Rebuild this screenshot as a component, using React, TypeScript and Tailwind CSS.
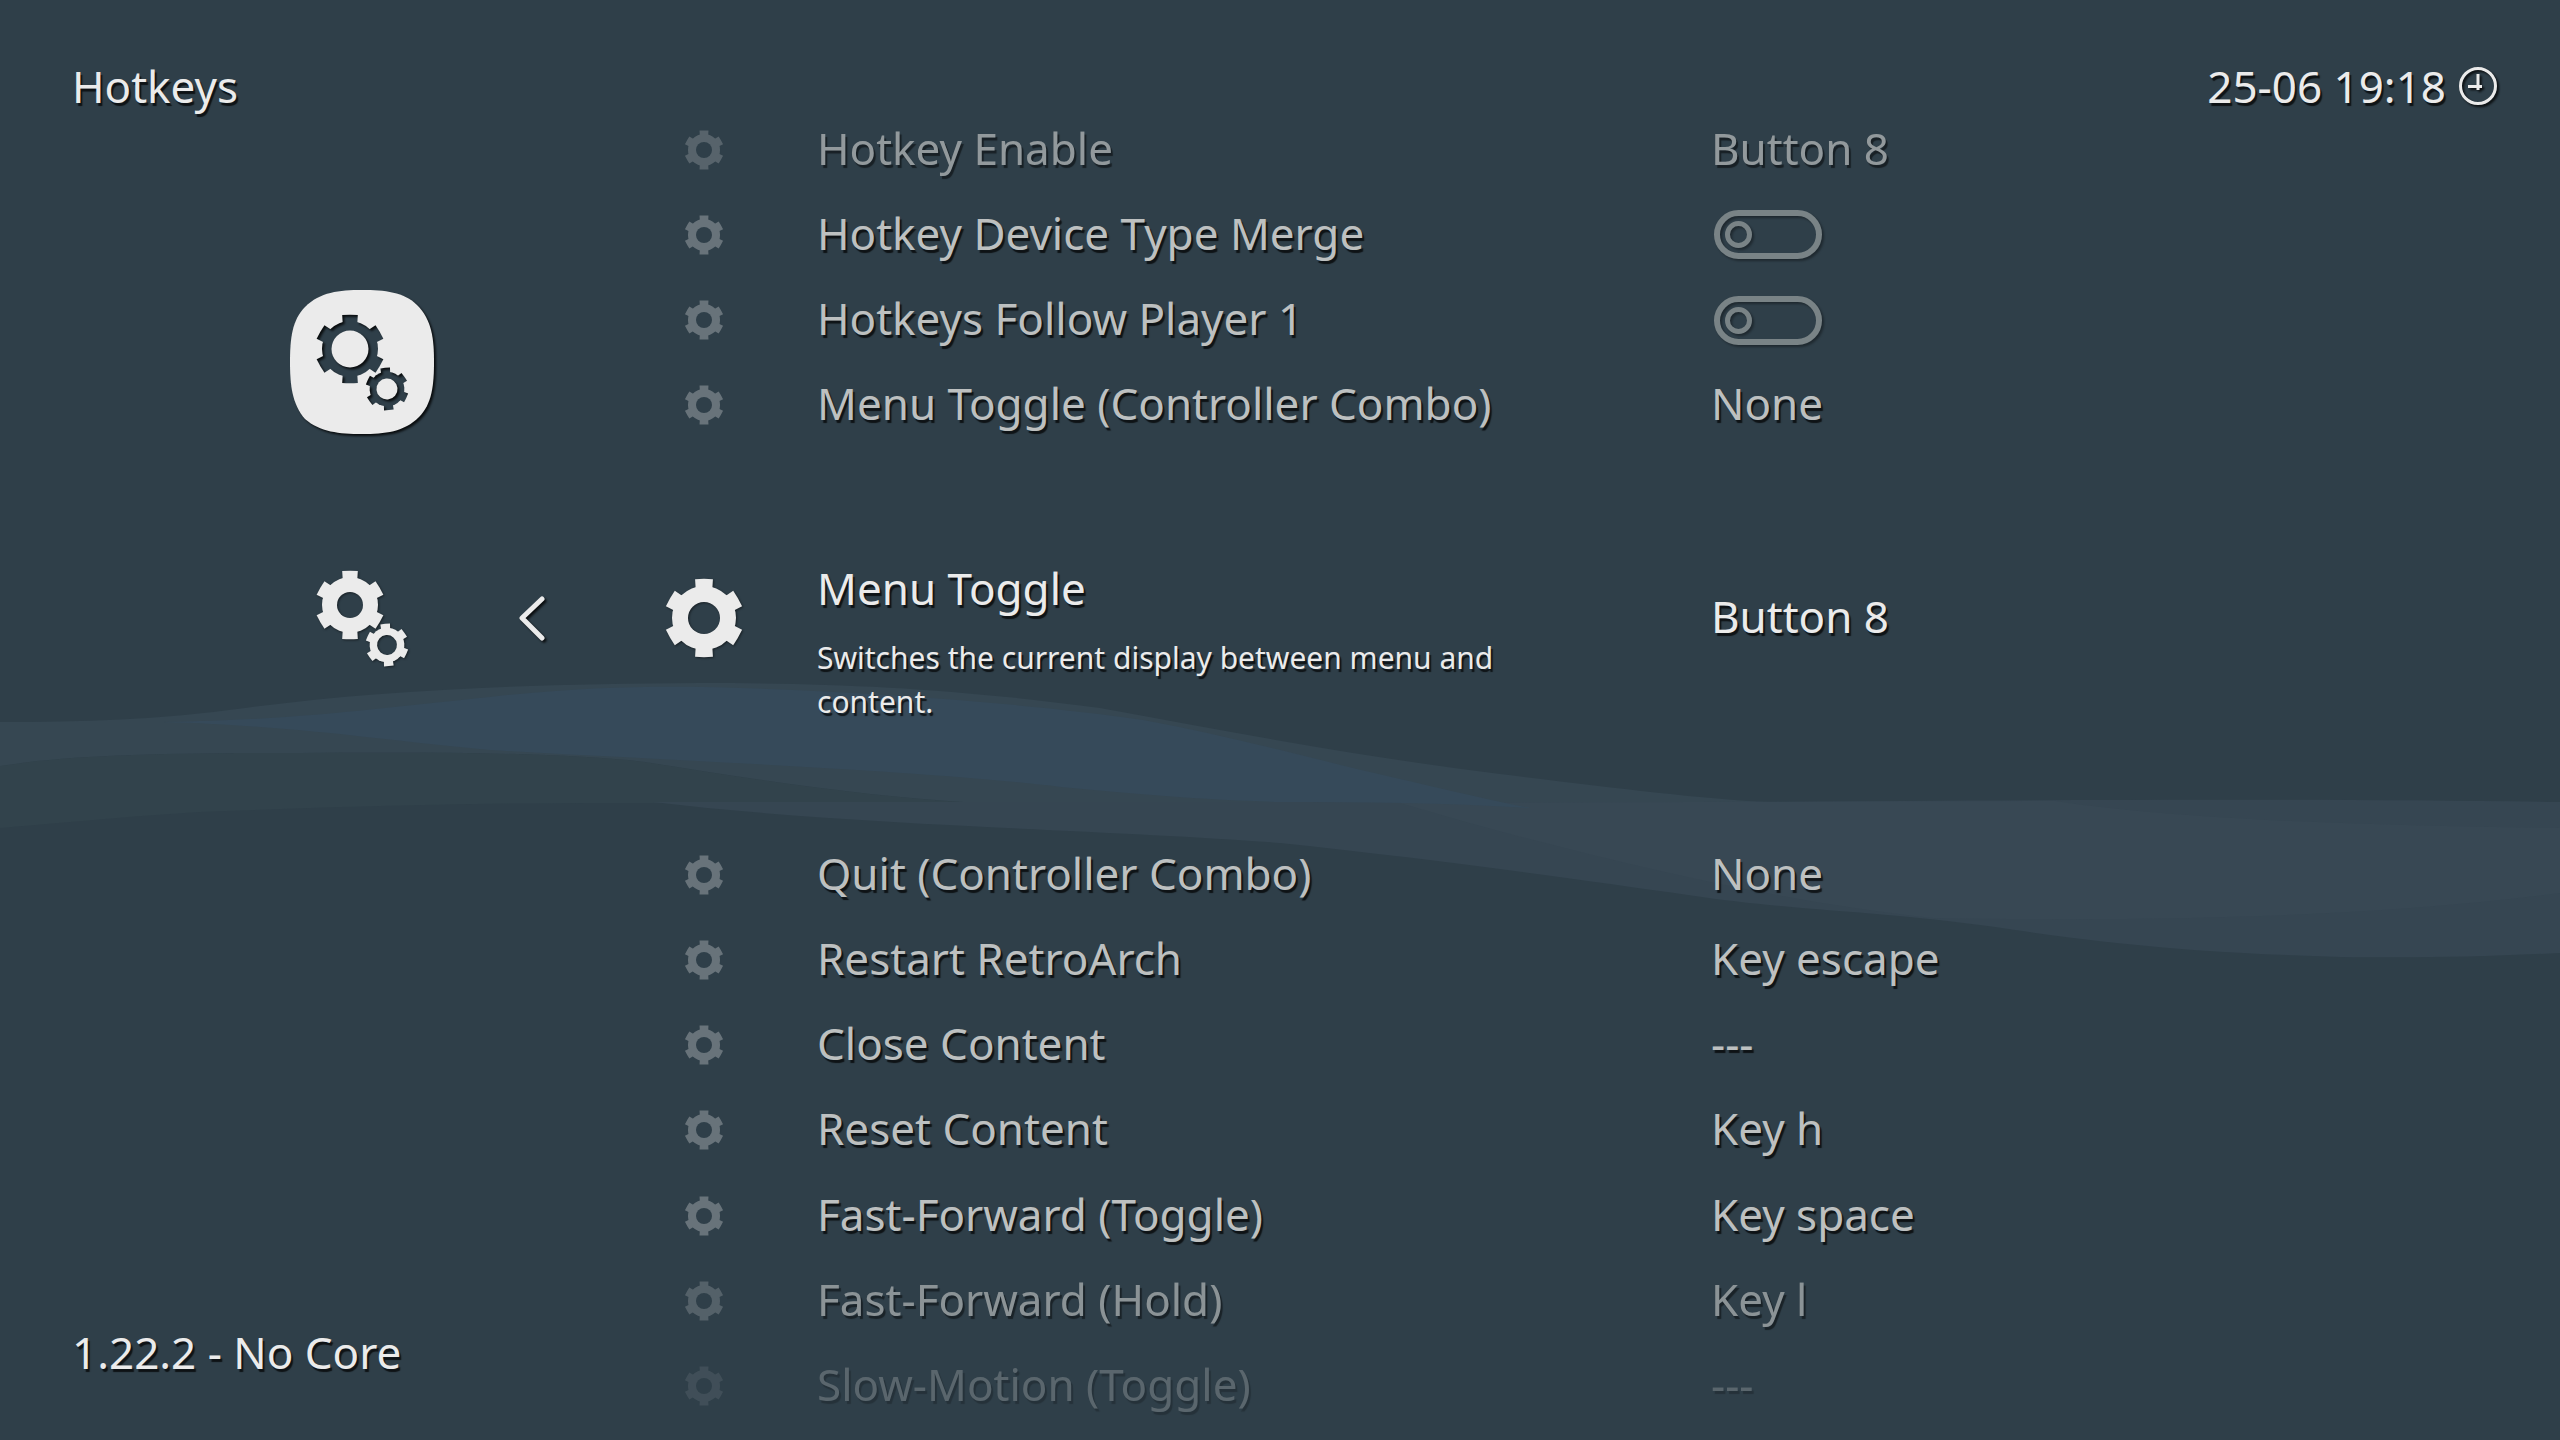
import { useState } from 'react'
import clsx from 'clsx'

type Hotkey = {
   name: string
   value?: string
   fade?: string
}

const above: Hotkey[] = [
   { name: 'Hotkey Enable', value: 'Button 8', fade: 'opacity-70' },
   { name: 'Hotkey Device Type Merge' },
   { name: 'Hotkeys Follow Player 1' },
   { name: 'Menu Toggle (Controller Combo)', value: 'None' },
]

const below: Hotkey[] = [
   { name: 'Quit (Controller Combo)', value: 'None' },
   { name: 'Restart RetroArch', value: 'Key escape' },
   { name: 'Close Content', value: '---' },
   { name: 'Reset Content', value: 'Key h' },
   { name: 'Fast-Forward (Toggle)', value: 'Key space' },
   { name: 'Fast-Forward (Hold)', value: 'Key l', fade: 'opacity-65' },
   { name: 'Slow-Motion (Toggle)', value: '---', fade: 'opacity-30' },
]

const TEETH = [0, 60, 120, 180, 240, 300]

const Gear = ({ hole = 'black', holeRadius = 13 }: { hole?: string; holeRadius?: number }) => (
   <>
      <circle r="28" />
      {TEETH.map((angle) => (
         <path key={angle} d="M-7.2-24 L-7.8-34 Q0-34.6 7.8-34 L7.2-24Z" transform={`rotate(${angle})`} />
      ))}
      <circle r={holeRadius} fill={hole} />
   </>
)

const GearIcon = ({ className }: { className?: string }) => (
   <svg viewBox="-35 -35 70 70" className={className} aria-hidden="true">
      <mask id="gear" maskUnits="userSpaceOnUse" x="-35" y="-35" width="70" height="70">
         <g fill="white">
            <Gear holeRadius={14} />
         </g>
      </mask>
      <rect x="-35" y="-35" width="70" height="70" fill="#ebebeb" mask="url(#gear)" />
   </svg>
)

const SettingsTile = () => (
   <svg
      viewBox="0 0 144 144"
      className="size-[144px] [filter:drop-shadow(2px_2px_1px_rgba(0,0,0,0.8))]"
      aria-hidden="true"
   >
      <mask id="tile" maskUnits="userSpaceOnUse" x="0" y="0" width="144" height="144">
         <path
            d="M72 0C95 0 114 2 127 15C142 30 144 49 144 72C144 95 142 114 129 127C114 142 95 144 72 144C49 144 30 142 15 129C2 114 0 95 0 72C0 49 2 30 15 17C30 2 49 0 72 0Z"
            fill="white"
         />
         <g fill="black">
            <g transform="translate(60 59)">
               <Gear hole="white" holeRadius={18.5} />
            </g>
            <g transform="translate(97 99) rotate(-5) scale(0.62)">
               <Gear hole="white" holeRadius={17} />
            </g>
         </g>
      </mask>
      <rect width="144" height="144" fill="#ebebeb" mask="url(#tile)" />
   </svg>
)

const SettingsIcon = () => (
   <svg
      viewBox="0 0 144 144"
      className="size-[144px] [filter:drop-shadow(1px_1px_1px_rgba(0,0,0,0.5))]"
      aria-hidden="true"
   >
      <mask id="gears" maskUnits="userSpaceOnUse" x="0" y="0" width="144" height="144">
         <g fill="white">
            <g transform="translate(60 59)">
               <Gear />
            </g>
            <g transform="translate(97 99) rotate(-5) scale(0.62)">
               <Gear holeRadius={16} />
            </g>
         </g>
      </mask>
      <rect width="144" height="144" fill="#ebebeb" mask="url(#gears)" />
   </svg>
)

const Clock = () => (
   <svg
      viewBox="0 0 40 40"
      className="size-10 [filter:drop-shadow(2px_2px_1px_rgba(0,0,0,0.8))]"
      fill="none"
      stroke="#ebebeb"
      strokeWidth="3"
      aria-hidden="true"
   >
      <circle cx="20" cy="20" r="17.5" />
      <path d="M20 8V24M10 20.5H24" />
   </svg>
)

const Ribbon = () => (
   <svg
      viewBox="0 0 2560 1440"
      preserveAspectRatio="none"
      className="absolute inset-0 -z-10 size-full"
      aria-hidden="true"
   >
      <path
         d="M0 766C70 755 160 753 300 753C420 752 560 752 645 762C760 780 860 796 980 803L653 803C480 802 300 808 200 812C120 817 50 824 0 828Z"
         fill="#32434c"
      />
      <path
         d="M0 722C80 722 160 720 245 708C380 690 520 684 700 683C840 683 950 688 1100 708C1240 734 1370 758 1500 774C1600 786 1700 799 1770 802L980 803C860 796 760 780 645 762C560 752 420 752 300 753C160 753 70 755 0 766Z"
         fill="#364752"
      />
      <path
         d="M653 802L1770 802C2000 800 2300 798 2560 802V953C2480 957 2420 958 2341 957C2220 953 2140 948 2015 930C1880 910 1800 912 1688 895C1580 880 1443 860 1280 843C1120 830 850 826 653 802Z"
         fill="#364652"
      />
      <path
         d="M1400 803L2055 801C2180 820 2380 826 2560 828V893C2380 916 2180 922 1933 918C1760 900 1560 850 1400 803Z"
         fill="#384854"
      />
      <path
         d="M163 722C300 720 380 708 490 697C570 688 640 686 702 687C840 690 1020 702 1143 720C1230 736 1310 758 1370 772C1430 786 1480 798 1530 808C1450 803 1360 802 1280 802C1180 799 1120 792 1061 787C920 770 700 762 490 750C380 740 300 726 163 722Z"
         fill="#364a5a"
      />
   </svg>
)

const Row = ({ name, value, fade }: Hotkey) => {
   const [checked, setChecked] = useState(false)

   const cells = (
      <>
         <span className="w-32 flex justify-center">
            <GearIcon className="size-10 opacity-30" />
         </span>
         <span className="w-[894px] ml-[49px] pb-1">{name}</span>
      </>
   )

   if (value === undefined) {
      return (
         <li className={clsx('flex', fade)}>
            <label className="w-full flex items-center">
               {cells}
               <input
                  type="checkbox"
                  checked={checked}
                  onChange={(e) => setChecked(e.target.checked)}
                  className="appearance-none ml-[3px] w-[108px] h-[49px] rounded-full border-6 border-[#798386] flex items-center px-[5px] checked:justify-end before:size-[27px] before:rounded-full before:border-5 before:border-[#798386] [filter:drop-shadow(2px_2px_1px_rgba(0,0,0,0.35))]"
               />
            </label>
         </li>
      )
   }

   return (
      <li className={clsx('flex', fade)}>
         <button className="w-full flex items-center text-left [text-shadow:inherit]">
            {cells}
            <span className="pb-1">{value}</span>
         </button>
      </li>
   )
}

const App = () => {
   return (
      <div className="relative isolate min-h-screen flex overflow-hidden bg-[#2f3f49] font-['Noto_Sans',sans-serif] text-[44px] leading-[56px] text-[#ebebeb] [text-shadow:2px_3px_1px_rgba(0,0,0,0.7)]">
         <Ribbon />

         <aside className="w-1/4 flex flex-col">
            <h1 className="pt-[58px] pl-[72px] font-normal">Hotkeys</h1>
            <nav className="mt-44 pl-[290px] flex flex-col gap-28">
               <SettingsTile />
               <div className="flex items-center gap-[82px]">
                  <SettingsIcon />
                  <button aria-label="Back">
                     <svg
                        viewBox="0 0 32 48"
                        className="w-8 h-12 [filter:drop-shadow(2px_2px_1px_rgba(0,0,0,0.8))]"
                        fill="none"
                        stroke="#ebebeb"
                        strokeWidth="5"
                        strokeLinecap="round"
                        strokeLinejoin="round"
                     >
                        <path d="M26 5L6 24L26 44" />
                     </svg>
                  </button>
               </div>
            </nav>
            <p className="mt-auto pl-[72px] pb-[60px]">1.22.2 - No Core</p>
         </aside>

         <main className="flex-1 pt-[107px]">
            <ul className="h-[341px] grid auto-rows-fr text-[#bdc0c0]">
               {above.map((item) => (
                  <Row key={item.name} {...item} />
               ))}
            </ul>

            <button
               className="w-full h-[384px] pb-11 flex items-center text-left [text-shadow:inherit]"
               aria-current="true"
            >
               <span className="w-32 flex justify-center">
                  <GearIcon className="size-20 [filter:drop-shadow(1px_1px_1px_rgba(0,0,0,0.5))]" />
               </span>
               <span className="w-[894px] ml-[49px] pt-12 flex flex-col gap-5">
                  <span>Menu Toggle</span>
                  <span className="w-[720px] text-[30px] leading-[44px]">
                     Switches the current display between menu and content.
                  </span>
               </span>
               <span className="pb-1">Button 8</span>
            </button>

            <ul className="h-[597px] grid auto-rows-fr text-[#bdc0c0]">
               {below.map((item) => (
                  <Row key={item.name} {...item} />
               ))}
            </ul>
         </main>

         <time className="absolute top-[58px] right-[62px] flex items-center gap-3">
            25-06 19:18
            <Clock />
         </time>
      </div>
   )
}

export default App
